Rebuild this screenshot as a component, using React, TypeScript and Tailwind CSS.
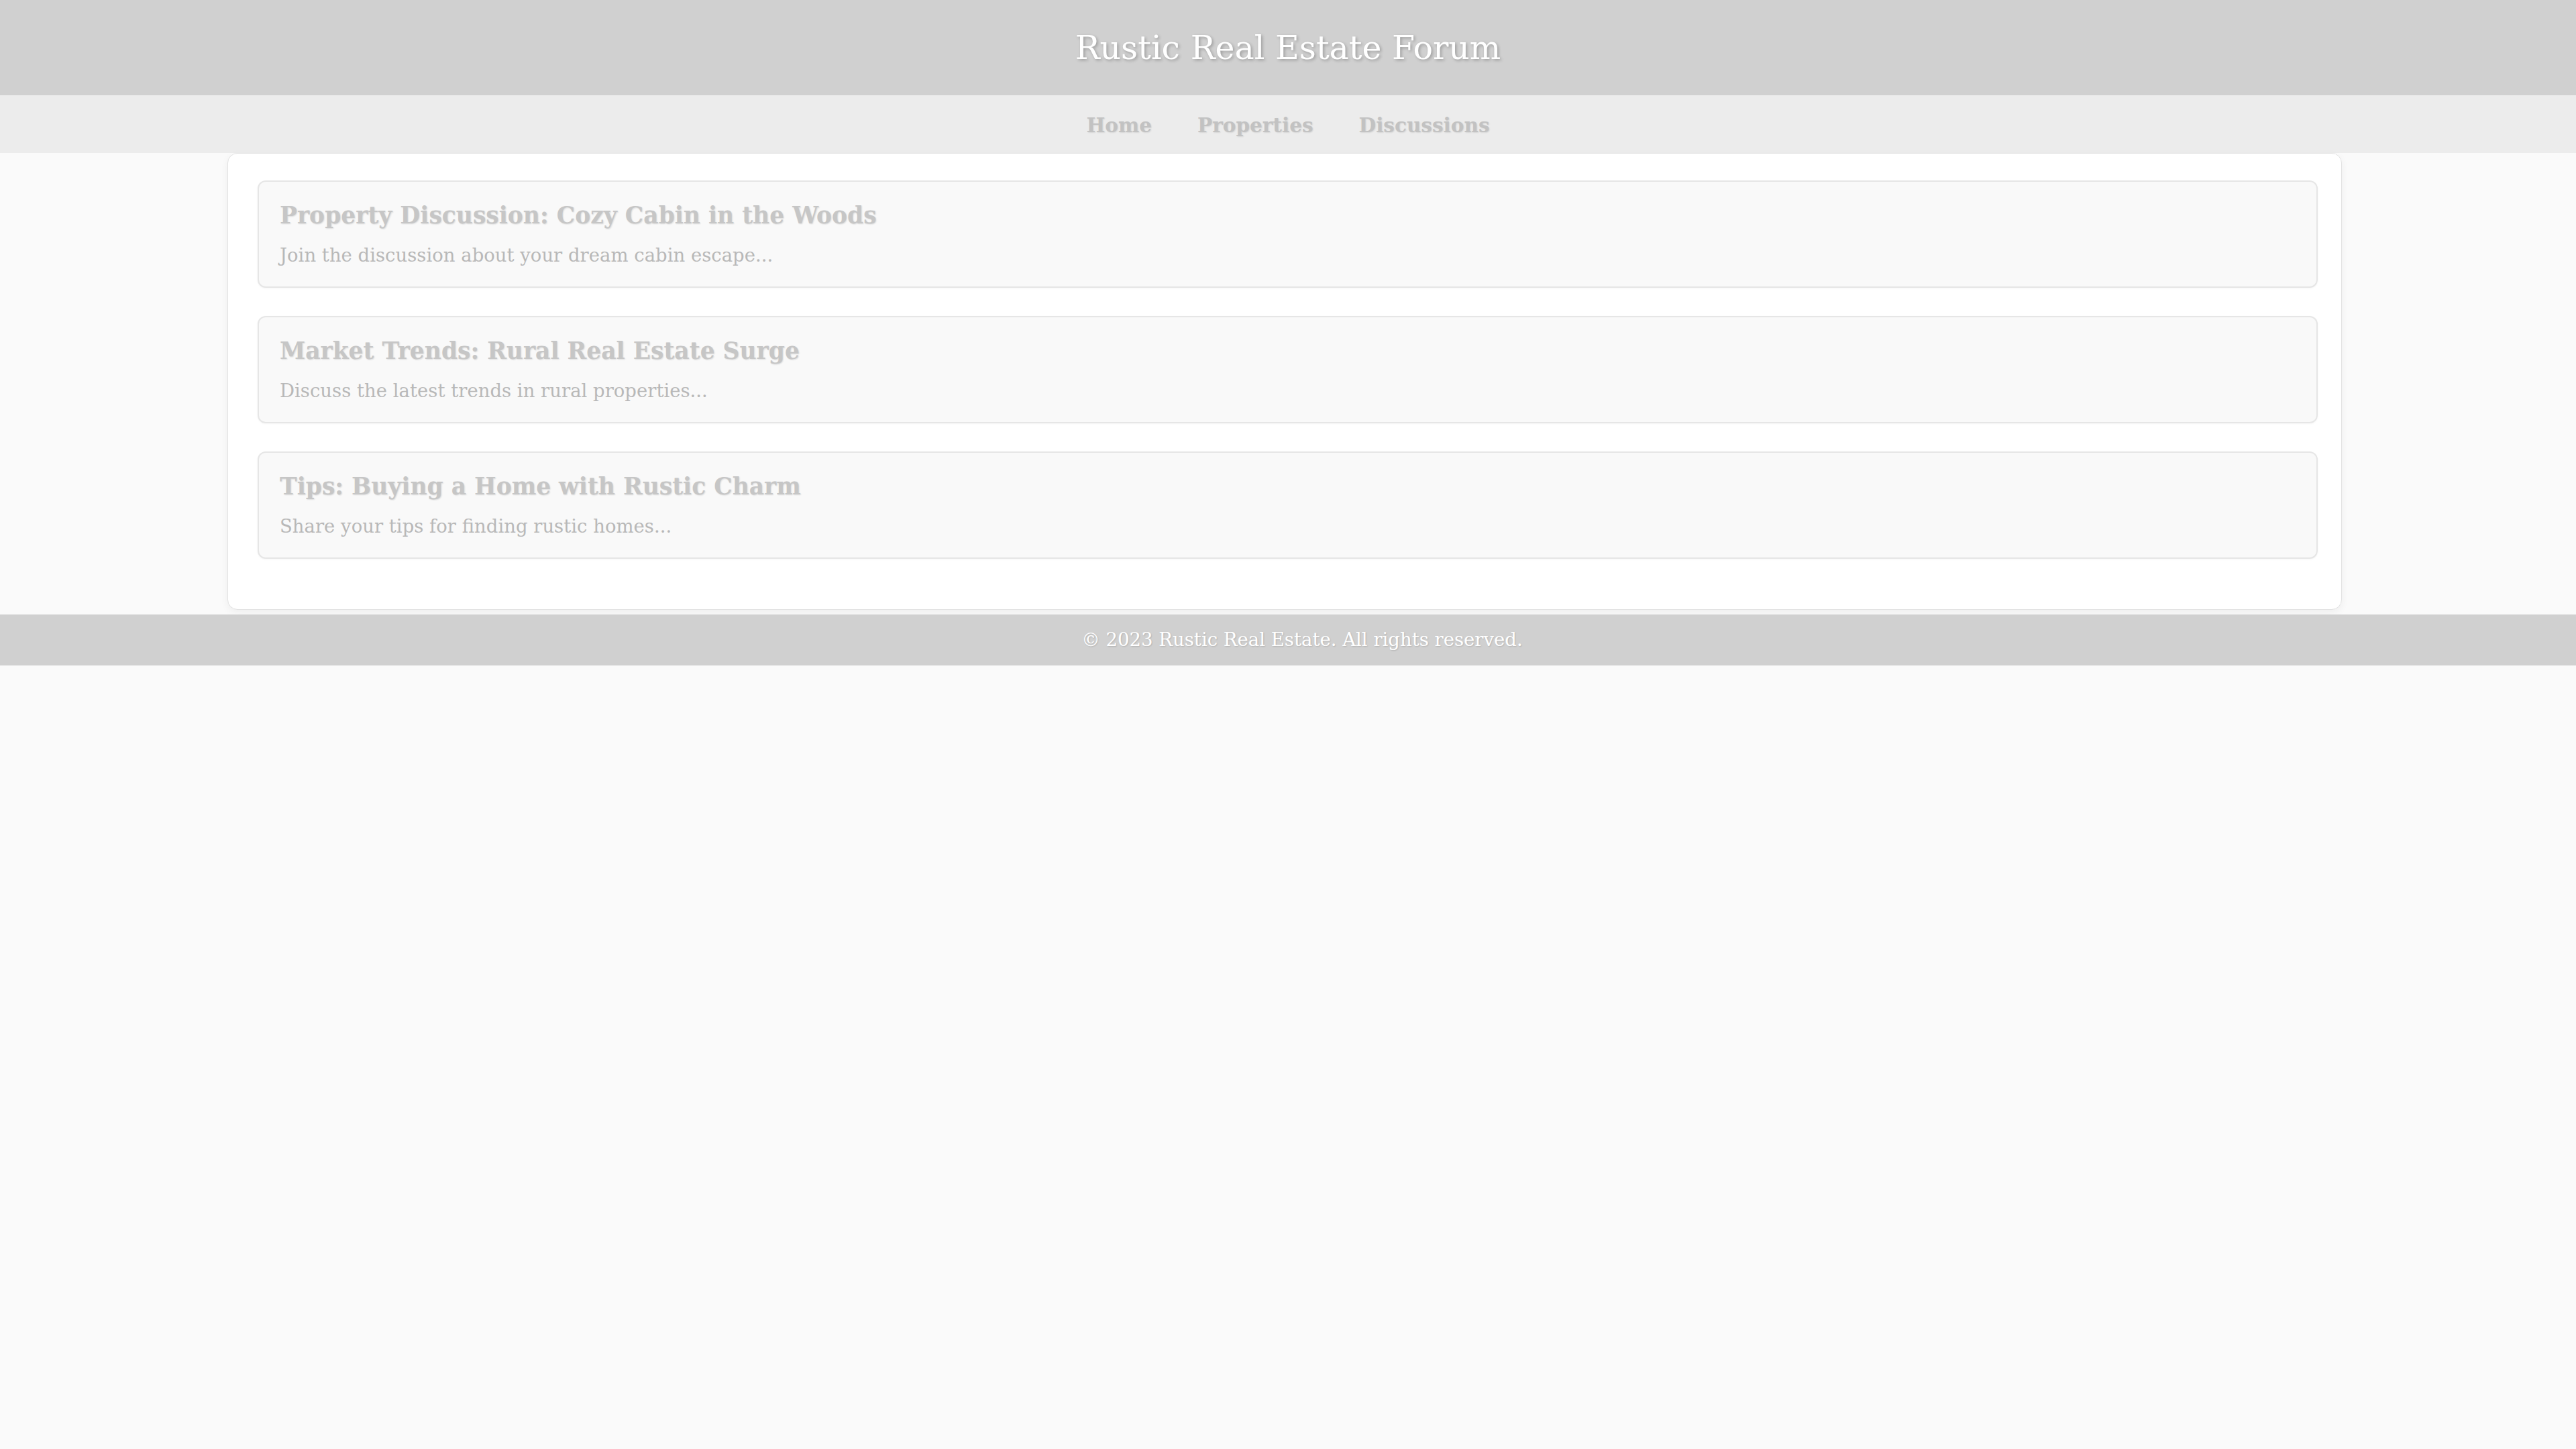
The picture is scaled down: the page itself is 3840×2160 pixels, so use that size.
import React from 'react';

interface Topic {
  title: string;
  excerpt: string;
}

const topics: Topic[] = [
  {
    title: 'Property Discussion: Cozy Cabin in the Woods',
    excerpt: 'Join the discussion about your dream cabin escape...',
  },
  {
    title: 'Market Trends: Rural Real Estate Surge',
    excerpt: 'Discuss the latest trends in rural properties...',
  },
  {
    title: 'Tips: Buying a Home with Rustic Charm',
    excerpt: 'Share your tips for finding rustic homes...',
  },
];

const navLinks = ['Home', 'Properties', 'Discussions'];

const TopicCard: React.FC<{ topic: Topic }> = ({ topic }) => (
  <div className="mb-[42px] h-[160px] rounded-[12px] border-2 border-[#e6e6e6] bg-[#f9f9f9] px-[31px] pt-[28px] shadow-[0_1px_3px_rgba(0,0,0,0.04)]">
    <h3 className="text-[34.5px] font-bold leading-[44px] text-[#c6c6c6] [text-shadow:1px_1px_2px_rgba(0,0,0,0.12)]">
      {topic.title}
    </h3>
    <p className="mt-[19px] text-[27.5px] leading-[36px] text-[#b8b8b8]">{topic.excerpt}</p>
  </div>
);

const App: React.FC = () => {
  return (
    <div className="min-h-screen bg-[#fafafa] font-['DejaVu_Serif',serif]">
      <header className="flex h-[142px] items-center justify-center bg-[#d0d0d0]">
        <h1 className="mt-[2px] text-[49px] font-normal text-white [text-shadow:2px_2px_4px_rgba(0,0,0,0.25)]">
          Rustic Real Estate Forum
        </h1>
      </header>

      <nav className="flex h-[86px] items-center justify-center gap-[68px] bg-[#ececec]">
        {navLinks.map((link) => (
          <a
            key={link}
            href="#"
            className="mt-[4px] text-[29.5px] font-bold text-[#c2c2c2] [text-shadow:1px_1px_2px_rgba(0,0,0,0.1)]"
          >
            {link}
          </a>
        ))}
      </nav>

      <main className="ml-[339px] w-[3152px] rounded-[15px] border border-[#e2e2e2] bg-white pb-[33px] pl-[44px] pr-[35px] pt-[40px] shadow-[0_4px_12px_rgba(0,0,0,0.05)]">
        {topics.map((topic) => (
          <TopicCard key={topic.title} topic={topic} />
        ))}
      </main>

      <footer className="mt-[7px] flex h-[76px] items-center justify-center bg-[#d0d0d0]">
        <p className="ml-[42px] text-[27.5px] text-white [text-shadow:1px_1px_2px_rgba(0,0,0,0.15)]">
          © 2023 Rustic Real Estate. All rights reserved.
        </p>
      </footer>
    </div>
  );
};

export default App;
